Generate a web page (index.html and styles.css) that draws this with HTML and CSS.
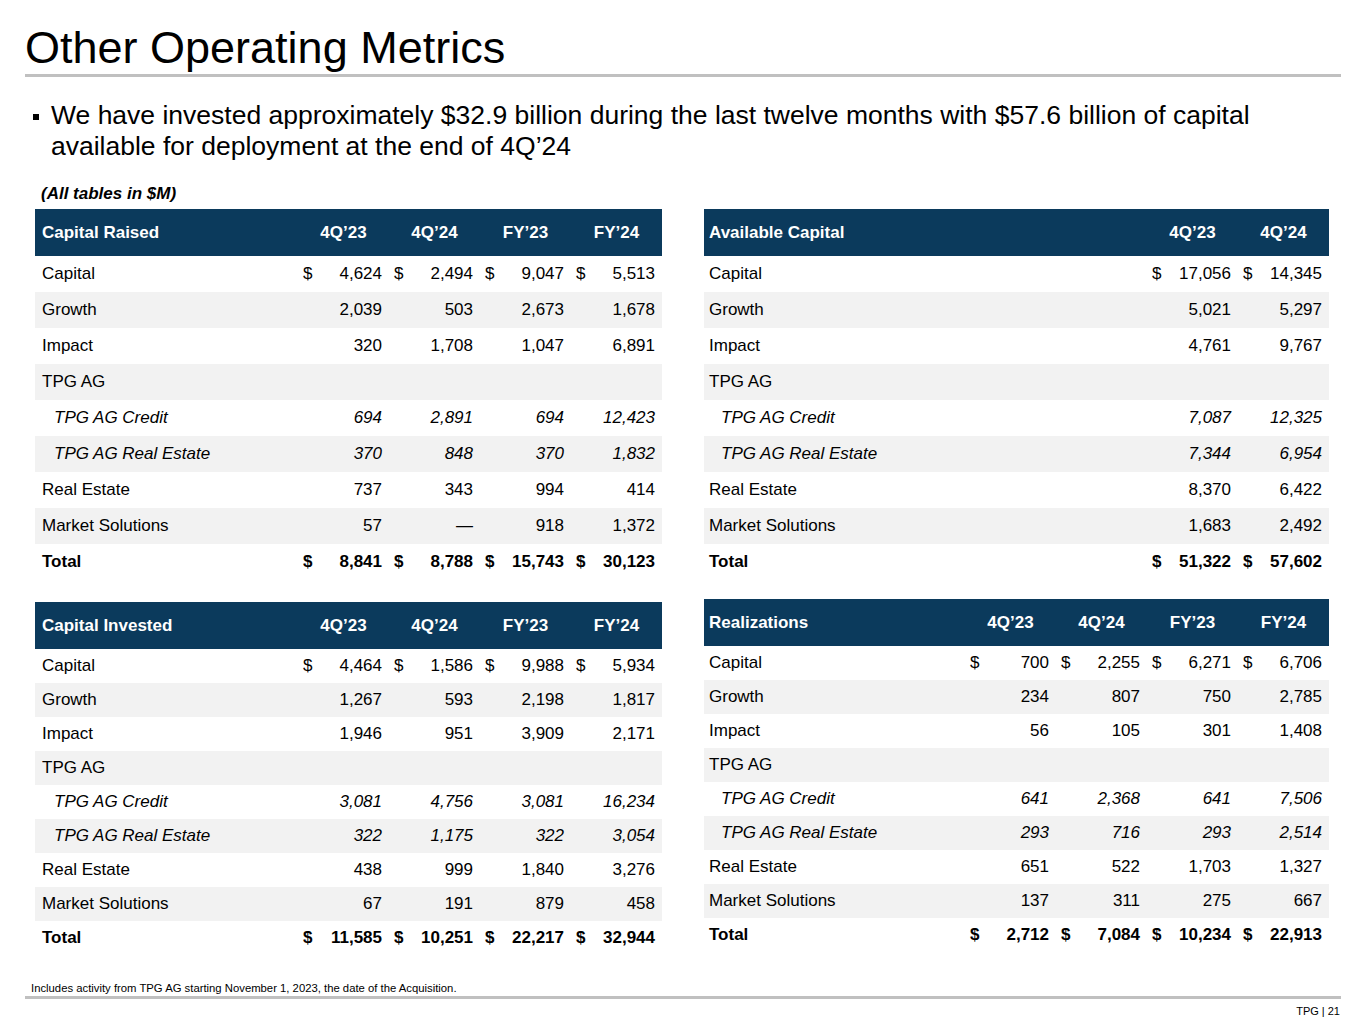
FILE: index.html
```html
<!DOCTYPE html>
<html>
<head>
<meta charset="utf-8">
<link rel="stylesheet" href="styles.css">
</head>
<body>
<div class="slide">
  <h1 class="title">Other Operating Metrics</h1>
  <div class="bullet"><span class="mark"></span><span class="btext">We have invested approximately $32.9 billion during the last twelve months with $57.6 billion of capital<br>available for deployment at the end of 4Q’24</span></div>
  <div class="note">(All tables in $M)</div>

  <div class="tables">
    <div class="col">
      <div class="tbl tall">
        <div class="row head"><div class="lbl">Capital Raised</div><div class="h">4Q’23</div><div class="h">4Q’24</div><div class="h">FY’23</div><div class="h">FY’24</div></div>
        <div class="row"><div class="lbl">Capital</div><div class="v"><span>$</span><span>4,624</span></div><div class="v"><span>$</span><span>2,494</span></div><div class="v"><span>$</span><span>9,047</span></div><div class="v"><span>$</span><span>5,513</span></div></div>
        <div class="row alt"><div class="lbl">Growth</div><div class="v"><span></span><span>2,039</span></div><div class="v"><span></span><span>503</span></div><div class="v"><span></span><span>2,673</span></div><div class="v"><span></span><span>1,678</span></div></div>
        <div class="row"><div class="lbl">Impact</div><div class="v"><span></span><span>320</span></div><div class="v"><span></span><span>1,708</span></div><div class="v"><span></span><span>1,047</span></div><div class="v"><span></span><span>6,891</span></div></div>
        <div class="row alt"><div class="lbl">TPG AG</div><div class="v"></div><div class="v"></div><div class="v"></div><div class="v"></div></div>
        <div class="row it"><div class="lbl">TPG AG Credit</div><div class="v"><span></span><span>694</span></div><div class="v"><span></span><span>2,891</span></div><div class="v"><span></span><span>694</span></div><div class="v"><span></span><span>12,423</span></div></div>
        <div class="row alt it"><div class="lbl">TPG AG Real Estate</div><div class="v"><span></span><span>370</span></div><div class="v"><span></span><span>848</span></div><div class="v"><span></span><span>370</span></div><div class="v"><span></span><span>1,832</span></div></div>
        <div class="row"><div class="lbl">Real Estate</div><div class="v"><span></span><span>737</span></div><div class="v"><span></span><span>343</span></div><div class="v"><span></span><span>994</span></div><div class="v"><span></span><span>414</span></div></div>
        <div class="row alt"><div class="lbl">Market Solutions</div><div class="v"><span></span><span>57</span></div><div class="v"><span></span><span>—</span></div><div class="v"><span></span><span>918</span></div><div class="v"><span></span><span>1,372</span></div></div>
        <div class="row total"><div class="lbl">Total</div><div class="v"><span>$</span><span>8,841</span></div><div class="v"><span>$</span><span>8,788</span></div><div class="v"><span>$</span><span>15,743</span></div><div class="v"><span>$</span><span>30,123</span></div></div>
      </div>

      <div class="tbl short gap-left">
        <div class="row head"><div class="lbl">Capital Invested</div><div class="h">4Q’23</div><div class="h">4Q’24</div><div class="h">FY’23</div><div class="h">FY’24</div></div>
        <div class="row"><div class="lbl">Capital</div><div class="v"><span>$</span><span>4,464</span></div><div class="v"><span>$</span><span>1,586</span></div><div class="v"><span>$</span><span>9,988</span></div><div class="v"><span>$</span><span>5,934</span></div></div>
        <div class="row alt"><div class="lbl">Growth</div><div class="v"><span></span><span>1,267</span></div><div class="v"><span></span><span>593</span></div><div class="v"><span></span><span>2,198</span></div><div class="v"><span></span><span>1,817</span></div></div>
        <div class="row"><div class="lbl">Impact</div><div class="v"><span></span><span>1,946</span></div><div class="v"><span></span><span>951</span></div><div class="v"><span></span><span>3,909</span></div><div class="v"><span></span><span>2,171</span></div></div>
        <div class="row alt"><div class="lbl">TPG AG</div><div class="v"></div><div class="v"></div><div class="v"></div><div class="v"></div></div>
        <div class="row it"><div class="lbl">TPG AG Credit</div><div class="v"><span></span><span>3,081</span></div><div class="v"><span></span><span>4,756</span></div><div class="v"><span></span><span>3,081</span></div><div class="v"><span></span><span>16,234</span></div></div>
        <div class="row alt it"><div class="lbl">TPG AG Real Estate</div><div class="v"><span></span><span>322</span></div><div class="v"><span></span><span>1,175</span></div><div class="v"><span></span><span>322</span></div><div class="v"><span></span><span>3,054</span></div></div>
        <div class="row"><div class="lbl">Real Estate</div><div class="v"><span></span><span>438</span></div><div class="v"><span></span><span>999</span></div><div class="v"><span></span><span>1,840</span></div><div class="v"><span></span><span>3,276</span></div></div>
        <div class="row alt"><div class="lbl">Market Solutions</div><div class="v"><span></span><span>67</span></div><div class="v"><span></span><span>191</span></div><div class="v"><span></span><span>879</span></div><div class="v"><span></span><span>458</span></div></div>
        <div class="row total"><div class="lbl">Total</div><div class="v"><span>$</span><span>11,585</span></div><div class="v"><span>$</span><span>10,251</span></div><div class="v"><span>$</span><span>22,217</span></div><div class="v"><span>$</span><span>32,944</span></div></div>
      </div>
    </div>

    <div class="col right">
      <div class="tbl tall two">
        <div class="row head"><div class="lbl">Available Capital</div><div class="h">4Q’23</div><div class="h">4Q’24</div></div>
        <div class="row"><div class="lbl">Capital</div><div class="v"><span>$</span><span>17,056</span></div><div class="v"><span>$</span><span>14,345</span></div></div>
        <div class="row alt"><div class="lbl">Growth</div><div class="v"><span></span><span>5,021</span></div><div class="v"><span></span><span>5,297</span></div></div>
        <div class="row"><div class="lbl">Impact</div><div class="v"><span></span><span>4,761</span></div><div class="v"><span></span><span>9,767</span></div></div>
        <div class="row alt"><div class="lbl">TPG AG</div><div class="v"></div><div class="v"></div></div>
        <div class="row it"><div class="lbl">TPG AG Credit</div><div class="v"><span></span><span>7,087</span></div><div class="v"><span></span><span>12,325</span></div></div>
        <div class="row alt it"><div class="lbl">TPG AG Real Estate</div><div class="v"><span></span><span>7,344</span></div><div class="v"><span></span><span>6,954</span></div></div>
        <div class="row"><div class="lbl">Real Estate</div><div class="v"><span></span><span>8,370</span></div><div class="v"><span></span><span>6,422</span></div></div>
        <div class="row alt"><div class="lbl">Market Solutions</div><div class="v"><span></span><span>1,683</span></div><div class="v"><span></span><span>2,492</span></div></div>
        <div class="row total"><div class="lbl">Total</div><div class="v"><span>$</span><span>51,322</span></div><div class="v"><span>$</span><span>57,602</span></div></div>
      </div>

      <div class="tbl short gap-right">
        <div class="row head"><div class="lbl">Realizations</div><div class="h">4Q’23</div><div class="h">4Q’24</div><div class="h">FY’23</div><div class="h">FY’24</div></div>
        <div class="row"><div class="lbl">Capital</div><div class="v"><span>$</span><span>700</span></div><div class="v"><span>$</span><span>2,255</span></div><div class="v"><span>$</span><span>6,271</span></div><div class="v"><span>$</span><span>6,706</span></div></div>
        <div class="row alt"><div class="lbl">Growth</div><div class="v"><span></span><span>234</span></div><div class="v"><span></span><span>807</span></div><div class="v"><span></span><span>750</span></div><div class="v"><span></span><span>2,785</span></div></div>
        <div class="row"><div class="lbl">Impact</div><div class="v"><span></span><span>56</span></div><div class="v"><span></span><span>105</span></div><div class="v"><span></span><span>301</span></div><div class="v"><span></span><span>1,408</span></div></div>
        <div class="row alt"><div class="lbl">TPG AG</div><div class="v"></div><div class="v"></div><div class="v"></div><div class="v"></div></div>
        <div class="row it"><div class="lbl">TPG AG Credit</div><div class="v"><span></span><span>641</span></div><div class="v"><span></span><span>2,368</span></div><div class="v"><span></span><span>641</span></div><div class="v"><span></span><span>7,506</span></div></div>
        <div class="row alt it"><div class="lbl">TPG AG Real Estate</div><div class="v"><span></span><span>293</span></div><div class="v"><span></span><span>716</span></div><div class="v"><span></span><span>293</span></div><div class="v"><span></span><span>2,514</span></div></div>
        <div class="row"><div class="lbl">Real Estate</div><div class="v"><span></span><span>651</span></div><div class="v"><span></span><span>522</span></div><div class="v"><span></span><span>1,703</span></div><div class="v"><span></span><span>1,327</span></div></div>
        <div class="row alt"><div class="lbl">Market Solutions</div><div class="v"><span></span><span>137</span></div><div class="v"><span></span><span>311</span></div><div class="v"><span></span><span>275</span></div><div class="v"><span></span><span>667</span></div></div>
        <div class="row total"><div class="lbl">Total</div><div class="v"><span>$</span><span>2,712</span></div><div class="v"><span>$</span><span>7,084</span></div><div class="v"><span>$</span><span>10,234</span></div><div class="v"><span>$</span><span>22,913</span></div></div>
      </div>
    </div>
  </div>

  <div class="footnote">Includes activity from TPG AG starting November 1, 2023, the date of the Acquisition.</div>
  <div class="bottom-rule"></div>
  <div class="pagenum">TPG | 21</div>
</div>
</body>
</html>
```

FILE: styles.css
```css
html, body {
  margin: 0;
  padding: 0;
  background: #ffffff;
}
body {
  font-family: "Liberation Sans", Arial, sans-serif;
  color: #000000;
}
.slide {
  width: 1365px;
  height: 1024px;
  overflow: hidden;
}
.title {
  margin: 0 24px 0 25px;
  padding-top: 22px;
  font-size: 45px;
  font-weight: normal;
  line-height: 52px;
  border-bottom: 3px solid #c0c0c0;
}
.bullet {
  display: flex;
  margin-top: 23px;
  padding-left: 33px;
  font-size: 26.5px;
  line-height: 31px;
}
.mark {
  flex: none;
  width: 6px;
  height: 6px;
  margin-top: 14px;
  margin-right: 12px;
  background: #000000;
}
.note {
  margin-top: 22px;
  padding-left: 41px;
  font-size: 17px;
  line-height: 20px;
  font-weight: bold;
  font-style: italic;
}
.tables {
  display: grid;
  grid-template-columns: 627px 625px;
  column-gap: 42px;
  padding-left: 35px;
  margin-top: 5px;
}
.col {
  display: flex;
  flex-direction: column;
}
.gap-left { margin-top: 22px; }
.gap-right { margin-top: 19px; }
.row {
  display: grid;
  grid-template-columns: 1fr repeat(4, 91px);
  align-items: center;
  font-size: 17px;
}
.two .row {
  grid-template-columns: 1fr repeat(2, 91px);
}
.tall .row { height: 36px; }
.short .row { height: 34px; }
.tbl .row.head {
  height: 47px;
  background: #0b3a5c;
  color: #ffffff;
  font-weight: bold;
}
.row.alt { background: #f2f2f2; }
.lbl { padding-left: 7px; }
.right .lbl { padding-left: 5px; }
.row.it .lbl { padding-left: 19px; font-style: italic; }
.right .row.it .lbl { padding-left: 17px; }
.row.it .v { font-style: italic; }
.h { text-align: center; }
.v {
  display: flex;
  justify-content: space-between;
  padding: 0 7px 0 5px;
}
.row.total { font-weight: bold; }
.footnote {
  margin-top: 27px;
  padding-left: 31px;
  font-size: 11.3px;
  line-height: 13px;
}
.bottom-rule {
  margin: 1px 24px 0 25px;
  height: 3px;
  background: #c0c0c0;
}
.pagenum {
  margin-top: 6px;
  padding-right: 25px;
  text-align: right;
  font-size: 11px;
  line-height: 13px;
}
```
